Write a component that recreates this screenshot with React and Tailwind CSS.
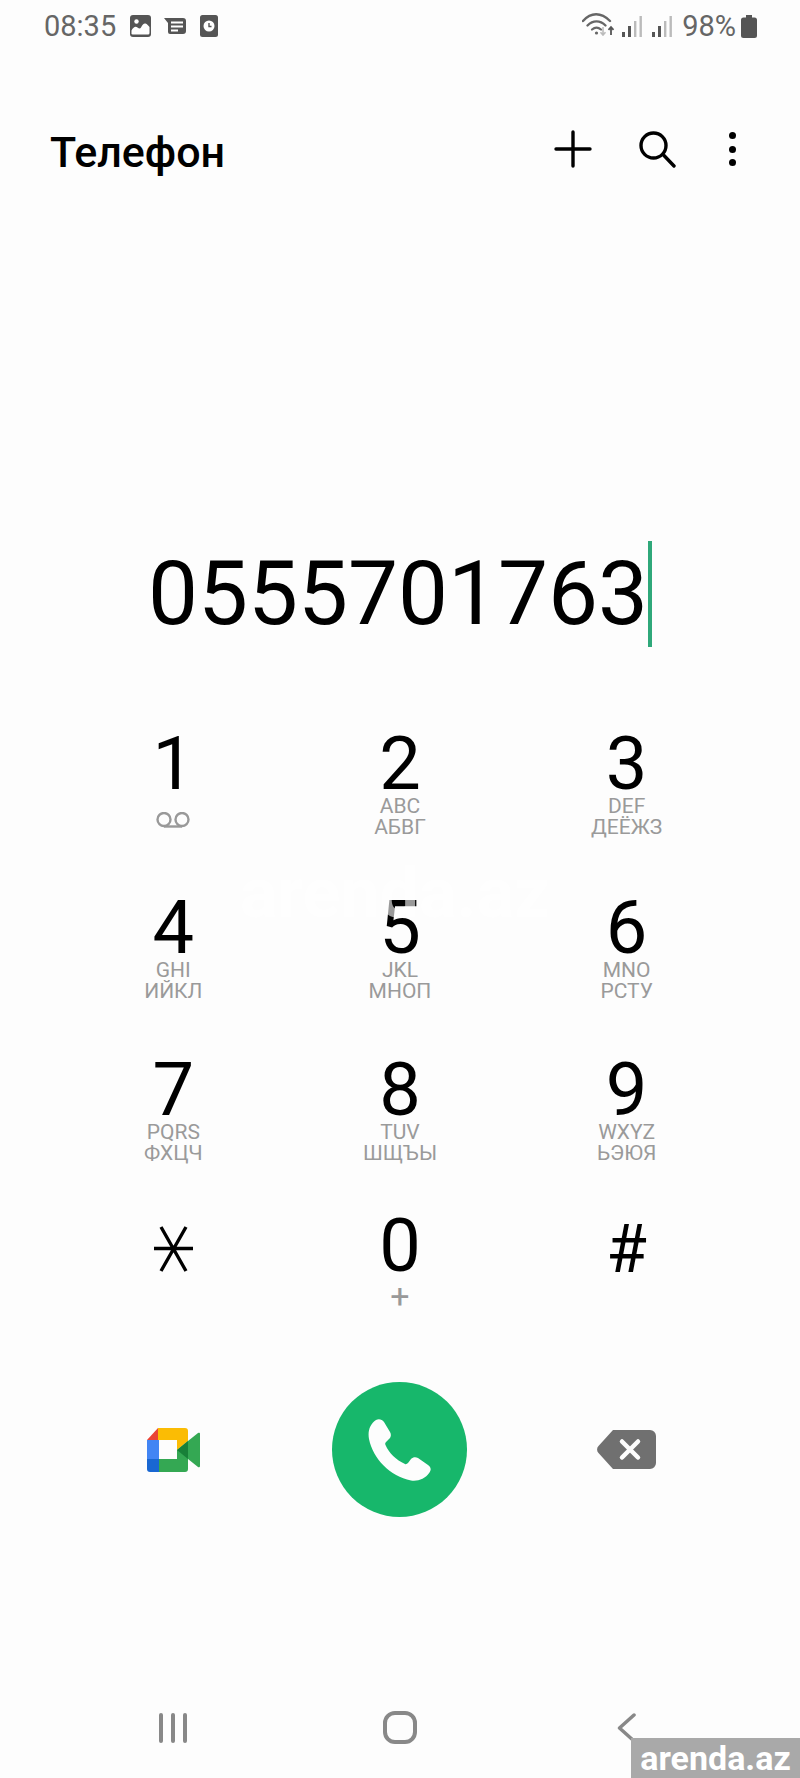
const roboto = "font-['Roboto',sans-serif]"

const keys = [
  { digit: "1", voicemail: true },
  { digit: "2", lines: ["ABC", "АБВГ"] },
  { digit: "3", lines: ["DEF", "ДЕЁЖЗ"] },
  { digit: "4", lines: ["GHI", "ИЙКЛ"] },
  { digit: "5", lines: ["JKL", "МНОП"] },
  { digit: "6", lines: ["MNO", "РСТУ"] },
  { digit: "7", lines: ["PQRS", "ФХЦЧ"] },
  { digit: "8", lines: ["TUV", "ШЩЪЫ"] },
  { digit: "9", lines: ["WXYZ", "ЬЭЮЯ"] },
  { star: true },
  { digit: "0", plus: true },
  { hash: true },
]

const GalleryIcon = () => (
  <svg width="21" height="22" viewBox="0 0 21 22">
    <rect width="21" height="22" rx="3" fill="#555" />
    <circle cx="6.5" cy="6.5" r="2.2" fill="#fff" />
    <path d="M1.5 19v-3.5c2-3.5 4-4.5 6-3 1.5 1 2.5 1.5 3.5 0 1.5-3 3-4.500 4.500-4 1.500.5 3 2 4 3.500V18a1.500 1.500 0 0 1-1.500 1.500H2.500z" fill="#fff" />
  </svg>
)

const MessageIcon = () => (
  <svg width="22" height="16" viewBox="0 0 22 16">
    <path d="M0 0h19a3 3 0 0 1 3 3v10a3 3 0 0 1-3 3H6a2 2 0 0 1-2-2V5z" fill="#555" />
    <rect x="7" y="3.5" width="12" height="2" fill="#fff" />
    <rect x="7" y="7.5" width="12" height="2" fill="#fff" />
    <rect x="7" y="11.5" width="7" height="2" fill="#fff" />
  </svg>
)

const ClockIcon = () => (
  <svg width="18" height="22" viewBox="0 0 18 22">
    <rect width="18" height="22" rx="2.5" fill="#555" />
    <circle cx="9" cy="11" r="5.5" fill="#fff" />
    <path d="M9 8v3.5h2.5" fill="none" stroke="#555" strokeWidth="1.4" />
  </svg>
)

const WifiIcon = () => (
  <svg width="33" height="23" viewBox="0 0 33 23" fill="none">
    <path d="M1 8C9 -1 19 -1 28 8" stroke="#666" strokeWidth="2.4" strokeLinecap="round" />
    <path d="M5.5 12.5C11 7 18 7 23.5 12.5" stroke="#666" strokeWidth="2.4" strokeLinecap="round" />
    <path d="M10 16.5c3-2.5 6-2.5 9 0" stroke="#666" strokeWidth="2.2" strokeLinecap="round" />
    <circle cx="14.5" cy="20" r="1.6" fill="#666" />
    <path d="M21 14v8m-2.5-2.8 2.5 2.8 2.5-2.8" stroke="#bbb" strokeWidth="1.6" />
    <path d="M29 22v-8m-2.5 2.8 2.5-2.8 2.5 2.8" stroke="#555" strokeWidth="1.8" />
  </svg>
)

const SignalIcon = () => (
  <svg width="20" height="21" viewBox="0 0 20 21">
    <rect x="0" y="16" width="3" height="5" fill="#555" />
    <rect x="6" y="10" width="3" height="11" fill="#555" />
    <rect x="12" y="5" width="2.4" height="16" fill="#bbb" />
    <rect x="17.5" y="0" width="2.4" height="21" fill="#bbb" />
  </svg>
)

const BatteryIcon = () => (
  <svg width="16" height="23" viewBox="0 0 16 23">
    <path d="M5 0h6v2.5h2.500A2.500 2.500 0 0 1 16 5v15.500a2.500 2.500 0 0 1-2.500 2.500h-11A2.500 2.500 0 0 1 0 20.500V5a2.500 2.500 0 0 1 2.500-2.500H5z" fill="#555" />
  </svg>
)

const PlusIcon = () => (
  <svg width="38" height="38" viewBox="0 0 38 38" stroke="#000" strokeWidth="3.4" strokeLinecap="round">
    <path d="M19 2v34M2 19h34" />
  </svg>
)

const SearchIcon = () => (
  <svg width="37" height="37" viewBox="0 0 37 37" fill="none" stroke="#000" strokeWidth="3.4" strokeLinecap="round">
    <circle cx="14.5" cy="14.5" r="12.5" />
    <path d="M25 24.500L35 35" />
  </svg>
)

const VoicemailIcon = () => (
  <svg width="36" height="16" viewBox="0 0 36 16" fill="none" stroke="#999" strokeWidth="2.4">
    <circle cx="9" cy="7.500" r="6.500" />
    <circle cx="27" cy="7.500" r="6.500" />
    <path d="M9 14.500h18" />
  </svg>
)

const StarIcon = () => (
  <svg width="39" height="46" viewBox="0 0 39 46" stroke="#000" strokeWidth="3.400">
    <path d="M0 22.500h39M7 1l25 44M32 1L7 45" />
  </svg>
)

const MeetIcon = () => (
  <svg width="53" height="44" viewBox="0 0 53 44">
    <path d="M11 0v12H0z" fill="#ea4335" />
    <path d="M11 0h27a3 3 0 0 1 3 3v10l-11 9V12H11z" fill="#fbbc04" />
    <rect x="0" y="12" width="12" height="19" fill="#4285f4" />
    <path d="M0 31h12v13H3a3 3 0 0 1-3-3z" fill="#1967d2" />
    <path d="M12 31h18v-9l11-9v28a3 3 0 0 1-3 3H12z" fill="#34a853" />
    <path d="M30 22l11-9v18z" fill="#188038" />
    <path d="M41 13l10-8a1.200 1.200 0 0 1 2 1v32a1.200 1.200 0 0 1-2 1l-10-8z" fill="#34a853" />
  </svg>
)

const PhoneIcon = () => (
  <svg width="63" height="62" viewBox="0 0 63 62">
    <path
      d="M8 1C11 -.5 14 .5 16 3L22 13C23.500 15.500 23 18 21 20L18 23C17 24 17 25 17.500 26C21 34 28 41 37 45C38 45.500 39 45 40 44L43 40C45 38 47.500 37.500 50 39L60 46C63 48 63.500 51 61.500 53.500C57 60 50 62.500 43 61.500C22 57 5 40 1 20C-.5 12 2 5 8 1Z"
      fill="#fdfdfd"
    />
  </svg>
)

const BackspaceIcon = () => (
  <svg width="59" height="39" viewBox="0 0 59 39">
    <path d="M16 0h37a6 6 0 0 1 6 6v27a6 6 0 0 1-6 6H16L1.500 23a5 5 0 0 1 0-7z" fill="#707070" />
    <path d="M25 11.500l16 16m0-16l-16 16" stroke="#fdfdfd" strokeWidth="4.500" strokeLinecap="round" />
  </svg>
)

const Key = ({ item }) => (
  <div className="flex flex-col items-center">
    {item.star && (
      <div className="mt-[17px]">
        <StarIcon />
      </div>
    )}
    {item.hash && <div className="mt-[8px] h-[66px] text-[66px] leading-[66px] text-black">#</div>}
    {item.digit && <div className="mt-[4px] h-[65px] text-[74px] leading-[66px] text-black">{item.digit}</div>}
    {item.lines && (
      <div className="text-center text-[21px] leading-[21px] text-[#9a9a9a]">
        <div>{item.lines[0]}</div>
        <div>{item.lines[1]}</div>
      </div>
    )}
    {item.voicemail && (
      <div className="mt-[16px]">
        <VoicemailIcon />
      </div>
    )}
    {item.plus && <div className="-mt-[2px] text-[34px] leading-[40px] text-[#999]">+</div>}
  </div>
)

export default function App() {
  return (
    <div className={`relative flex h-[1778px] w-[800px] flex-col overflow-hidden bg-[#fdfdfd] ${roboto}`}>
      {/* Status bar */}
      <div className="flex h-[48px] items-start justify-between pl-[44px] pr-[43px] pt-[14px]">
        <div className="flex items-center">
          <span className="text-[29px] leading-[24px] text-[#666]">08:35</span>
          <div className="ml-[14px] flex items-center gap-[13px]">
            <GalleryIcon />
            <MessageIcon />
            <div className="ml-[1px]"><ClockIcon /></div>
          </div>
        </div>
        <div className="flex items-center">
          <div className="-mt-[3px]"><WifiIcon /></div>
          <div className="ml-[7px]"><SignalIcon /></div>
          <div className="ml-[10px]"><SignalIcon /></div>
          <span className="ml-[10px] text-[29px] leading-[24px] text-[#666]">98%</span>
          <div className="ml-[5px]"><BatteryIcon /></div>
        </div>
      </div>

      {/* Header */}
      <div className="mt-[79px] flex h-[50px] items-center justify-between pl-[50px] pr-[64px]">
        <h1 className="text-[43px] font-medium leading-[50px] text-black">Телефон</h1>
        <div className="-mt-[6px] flex items-center">
          <PlusIcon />
          <div className="ml-[47px]"><SearchIcon /></div>
          <div className="ml-[53px] flex flex-col gap-[6.5px]">
            <div className="h-[7px] w-[7px] rounded-full bg-black" />
            <div className="h-[7px] w-[7px] rounded-full bg-black" />
            <div className="h-[7px] w-[7px] rounded-full bg-black" />
          </div>
        </div>
      </div>

      {/* Number */}
      <div className="mt-[364px] flex h-[106px] items-center justify-center">
        <span className="text-[89px] leading-[106px] text-black">0555701763</span>
        <div className="h-[106px] w-[4px] bg-[#2fa87a]" />
      </div>

      {/* Keypad */}
      <div className="mt-[80px] grid grid-cols-3 grid-rows-[164px_162px_156px_100px] px-[60px]">
        {keys.map((item, i) => (
          <Key key={i} item={item} />
        ))}
      </div>

      {/* Actions */}
      <div className="mt-[73px] grid grid-cols-3 items-center px-[60px]">
        <div className="flex justify-center"><MeetIcon /></div>
        <div className="flex justify-center">
          <div className="flex h-[135px] w-[135px] items-center justify-center rounded-full bg-[#17b76b]">
            <PhoneIcon />
          </div>
        </div>
        <div className="flex justify-center"><BackspaceIcon /></div>
      </div>

      {/* Navigation */}
      <div className="mt-[194px] grid grid-cols-3 items-center px-[60px]">
        <div className="flex justify-center gap-[8px]">
          <div className="h-[30px] w-[4px] rounded-full bg-[#888]" />
          <div className="h-[30px] w-[4px] rounded-full bg-[#888]" />
          <div className="h-[30px] w-[4px] rounded-full bg-[#888]" />
        </div>
        <div className="flex justify-center">
          <div className="h-[33px] w-[34px] rounded-[12px] border-[4px] border-[#888]" />
        </div>
        <div className="flex justify-center">
          <svg width="19" height="30" viewBox="0 0 19 30" fill="none">
            <path d="M17 2L2.500 15 17 28" stroke="#888" strokeWidth="3.500" strokeLinecap="round" strokeLinejoin="round" />
          </svg>
        </div>
      </div>

      {/* Watermarks */}
      <div className="absolute left-[240px] top-[858px] text-[70px] font-bold leading-[70px] text-white/60">arenda.az</div>
      <div className="absolute bottom-0 right-0 flex h-[40px] w-[169px] items-center justify-center bg-[#a9a9a9] text-[34px] font-bold leading-[40px] text-white">
        arenda.az
      </div>
    </div>
  )
}
